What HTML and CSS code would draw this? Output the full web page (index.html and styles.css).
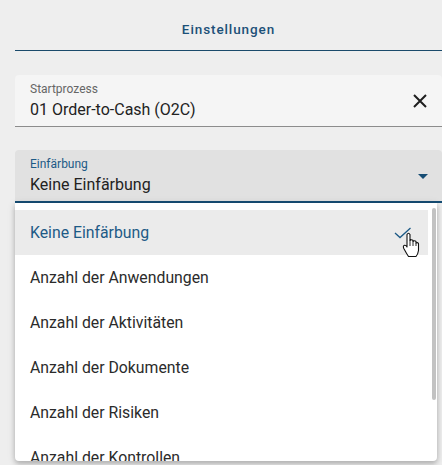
FILE: index.html
```html
<!DOCTYPE html>
<html lang="de">
<head>
<meta charset="utf-8">
<link rel="stylesheet" href="styles.css">
</head>
<body>
<div class="page">
  <div class="tab-header"><span class="tab-label">Einstellungen</span></div>

  <div class="field field-filled">
    <div class="field-text">
      <div class="field-label">Startprozess</div>
      <div class="field-value">01 Order-to-Cash (O2C)</div>
    </div>
    <svg class="clear-icon" width="14" height="14" viewBox="0 0 14 14"><path d="M1 1 L13 13 M13 1 L1 13" stroke="#1e1e1e" stroke-width="2" fill="none"/></svg>
  </div>

  <div class="field field-focused">
    <div class="field-text">
      <div class="field-label label-blue">Einfärbung</div>
      <div class="field-value">Keine Einfärbung</div>
    </div>
    <svg class="arrow-icon" width="10" height="5" viewBox="0 0 10 5"><path d="M0 0 L10 0 L5 5 Z" fill="#164d74"/></svg>
  </div>

  <div class="panel">
    <div class="options">
      <div class="option option-selected">
        <span>Keine Einfärbung</span>
        <svg class="check" width="18" height="12" viewBox="0 0 18 12"><path d="M1 6 L6 10.5 L16.5 1" stroke="#1d5a86" stroke-width="1.3" fill="none"/></svg>
      </div>
      <div class="option"><span>Anzahl der Anwendungen</span></div>
      <div class="option"><span>Anzahl der Aktivitäten</span></div>
      <div class="option"><span>Anzahl der Dokumente</span></div>
      <div class="option"><span>Anzahl der Risiken</span></div>
      <div class="option"><span>Anzahl der Kontrollen</span></div>
    </div>
    <div class="scrollbar"></div>
    <svg class="cursor" width="18" height="26" viewBox="0 0 18 26">
      <path d="M5 11 L5 2.5 Q6.5 0 8 2.5 L8 8.5 Q9.5 7 11 8.5 L11 9.5 Q12.5 8 14 9.5 L14 11 Q15.5 10 16.5 11.5 L16.5 18.5 Q16 22 14 24.5 L6.5 24.5 Q4.5 21.5 1.8 16.5 Q0.6 13.8 2.6 13.3 Q4 13.2 5 15 Z" fill="#fff" stroke="#111" stroke-width="1.1" stroke-linejoin="round"/>
      <path d="M8 8.5 L8 14 M11 9.5 L11 14 M14 11 L14 14" stroke="#111" stroke-width="0.9" fill="none"/>
    </svg>
  </div>
</div>
</body>
</html>
```

FILE: styles.css
```css
html, body {
  margin: 0;
  padding: 0;
}
body {
  background: #eeeeee;
  font-family: Roboto, "Noto Sans", Arial, sans-serif;
  overflow: hidden;
  width: 442px;
  height: 465px;
}
.page {
  padding-left: 15px;
  width: 427px;
}
.tab-header {
  height: 42px;
  padding-top: 8px;
  display: flex;
  align-items: center;
  justify-content: center;
  border-bottom: 1.5px solid #1a4a6b;
}
.tab-label {
  font-size: 13.5px;
  font-weight: 500;
  letter-spacing: 0.9px;
  color: #1c5078;
}
.field {
  display: flex;
  align-items: center;
  height: 51px;
  padding: 0 15px;
  border-radius: 4px 4px 0 0;
}
.field-filled {
  margin-top: 24px;
  background: #f5f5f5;
  border-bottom: 1px solid #8c8c8c;
}
.field-focused {
  margin-top: 23px;
  height: 51px;
  background: #e1e1e1;
  border-bottom: 2px solid #164d74;
}
.field-text {
  flex: 1;
  display: flex;
  flex-direction: column;
  padding-top: 2px;
}
.field-label {
  font-size: 12px;
  color: #666;
  line-height: 14px;
}
.label-blue {
  color: #1d5a86;
}
.field-value {
  font-size: 16px;
  color: #222;
  line-height: 22px;
  margin-top: 3px;
}
.clear-icon {
  margin-right: 0;
}
.arrow-icon {
  margin-right: -1px;
  margin-top: 2px;
}
.panel {
  position: relative;
  width: 422px;
  height: 258px;
  background: #fff;
  border-radius: 0 0 4px 4px;
  box-shadow: 0 3px 5px rgba(0,0,0,0.2), 0 1px 8px rgba(0,0,0,0.12);
  overflow: hidden;
  padding-top: 7px;
  box-sizing: border-box;
}
.options {
  width: 413px;
}
.option {
  height: 45px;
  display: flex;
  align-items: center;
  justify-content: space-between;
  padding: 0 15px;
  font-size: 15.8px;
  color: #2b2b2b;
}
.option-selected {
  background: #ebebeb;
  color: #1d5a86;
}
.check {
  margin-right: 1px;
}
.scrollbar {
  position: absolute;
  right: 1px;
  top: 5px;
  width: 4px;
  height: 192px;
  background: #c2c2c2;
  border-radius: 2px;
}
.cursor {
  position: absolute;
  left: 387px;
  top: 29px;
}
```
